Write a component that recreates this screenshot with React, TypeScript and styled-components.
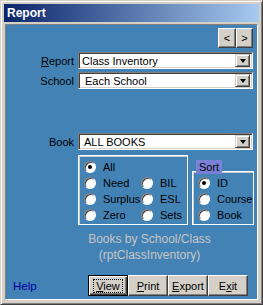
import * as React from 'react';
import styled, { createGlobalStyle } from 'styled-components';

const Global = createGlobalStyle`
  html, body { margin: 0; padding: 0; background: #d4d0c8; }
  body { font-family: "Liberation Sans", Arial, sans-serif; font-size: 11px; }
`;

const Window = styled.div`
  width: 263px;
  height: 305px;
  box-sizing: border-box;
  background: #d4d0c8;
  border: 1px solid;
  border-color: #d4d0c8 #404040 #404040 #d4d0c8;
  box-shadow: inset 1px 1px #fff, inset -1px -1px #808080;
  padding: 3px 3px 3px 3px;
  display: flex;
  flex-direction: column;
`;

const TitleBar = styled.div`
  height: 18px;
  background: linear-gradient(to right, #0a246a, #a6caf0);
  color: #fff;
  font-weight: bold;
  font-size: 12px;
  display: flex;
  align-items: center;
  padding-left: 3px;
  margin-bottom: 2px;
`;

const Panel = styled.div`
  flex: 1;
  margin: 0 1px 1px 1px;
  background: #4382b5;
  border: 1px solid;
  border-color: #808080 #fff #fff #808080;
  padding: 3px 3px 0 0;
  display: flex;
  flex-direction: column;
`;

const NavRow = styled.div`
  display: flex;
  justify-content: flex-end;
  padding-right: 1px;
  margin-bottom: 4px;
`;

const RaisedButton = styled.button<{ $w: number; $h: number }>`
  width: ${p => p.$w}px;
  height: ${p => p.$h}px;
  box-sizing: border-box;
  margin: 0;
  padding: 0;
  background: #d4d0c8;
  border: 1px solid;
  border-color: #fff #404040 #404040 #fff;
  box-shadow: inset -1px -1px #808080;
  font-family: "Liberation Sans", Arial, sans-serif;
  font-size: 11px;
  color: #000;
  display: flex;
  align-items: center;
  justify-content: center;
`;

const FieldRow = styled.div<{ $gap: number }>`
  display: flex;
  align-items: center;
  margin-bottom: ${p => p.$gap}px;
`;

const Label = styled.div`
  width: 68px;
  text-align: right;
  padding-right: 4px;
  color: #000;
  font-size: 11px;
`;

const Combo = styled.div`
  width: 175px;
  height: 17px;
  box-sizing: border-box;
  background: #fff;
  border: 1px solid;
  border-color: #808080 #fff #fff #808080;
  box-shadow: inset 1px 1px #404040, inset -1px -1px #d4d0c8;
  display: flex;
  align-items: center;
  padding: 2px;
`;

const ComboText = styled.div<{ $indent: number }>`
  flex: 1;
  padding-left: ${p => p.$indent}px;
  font-size: 11px;
  color: #000;
  white-space: nowrap;
  overflow: hidden;
`;

const DropButton = styled.div`
  width: 15px;
  height: 13px;
  box-sizing: border-box;
  background: #d4d0c8;
  border: 1px solid;
  border-color: #d4d0c8 #404040 #404040 #d4d0c8;
  box-shadow: inset 1px 1px #fff, inset -1px -1px #808080;
  display: flex;
  align-items: center;
  justify-content: center;
`;

const Arrow = styled.div`
  width: 0;
  height: 0;
  border-left: 3.5px solid transparent;
  border-right: 3.5px solid transparent;
  border-top: 4px solid #000;
  margin-top: 1px;
`;

const OptionsArea = styled.div`
  display: flex;
  align-items: flex-end;
  margin-left: 72px;
  margin-top: 5px;
`;

const GroupBox = styled.div<{ $w: number }>`
  position: relative;
  width: ${p => p.$w}px;
  box-sizing: border-box;
  border: 1px solid #fff;
  box-shadow: inset 1px 1px #c8ccd4;
  padding: 4px 0 3px 5px;
`;

const Columns = styled.div`
  display: grid;
  grid-template-columns: 57px auto;
  row-gap: 3px;
`;

const Stack = styled.div`
  display: flex;
  flex-direction: column;
  gap: 3px;
`;

const Option = styled.div`
  display: flex;
  align-items: center;
  height: 13px;
  color: #000;
  font-size: 11px;
`;

const Radio = styled.span<{ $on?: boolean }>`
  width: 12px;
  height: 12px;
  box-sizing: border-box;
  border-radius: 50%;
  background: #fff;
  border: 1px solid;
  border-color: #808080 #fff #fff #808080;
  box-shadow: inset 1px 1px #404040;
  display: inline-flex;
  align-items: center;
  justify-content: center;
  margin-right: 7px;
  &::after {
    content: '';
    width: 4px;
    height: 4px;
    border-radius: 50%;
    background: ${p => (p.$on ? '#000' : 'transparent')};
  }
`;

const SortWrap = styled.div`
  display: flex;
  flex-direction: column;
  margin-left: 4px;
`;

const SortTag = styled.div`
  align-self: flex-start;
  margin-left: 4px;
  margin-bottom: -3px;
  position: relative;
  z-index: 1;
  background: #7a80d6;
  color: #000;
  font-size: 11px;
  padding: 0 3px;
  height: 14px;
  line-height: 14px;
`;

const Caption = styled.div`
  margin-left: 72px;
  width: 143px;
  margin-top: 6px;
  text-align: center;
  color: #c6c6c6;
  font-size: 12px;
  line-height: 16px;
`;

const BottomRow = styled.div`
  margin-top: auto;
  display: flex;
  align-items: center;
  padding: 0 0 3px 7px;
`;

const HelpLink = styled.div`
  color: #0000a0;
  font-size: 11.5px;
  flex: 1;
`;

const Buttons = styled.div`
  display: flex;
  margin-right: 6px;
`;

const DefaultButton = styled(RaisedButton)`
  border: 1px solid #000;
  box-shadow: inset 1px 1px #fff, inset -1px -1px #404040, inset -2px -2px #808080;
`;

const Focus = styled.span`
  border: 1px dotted #000;
  padding: 0 2px;
  line-height: 12px;
`;

const U = styled.span`
  text-decoration: underline;
`;

export default function App() {
  return (
    <>
      <Global />
      <Window>
        <TitleBar>Report</TitleBar>
        <Panel>
          <NavRow>
            <RaisedButton $w={18} $h={20}>&lt;</RaisedButton>
            <RaisedButton $w={17} $h={20}>&gt;</RaisedButton>
          </NavRow>
          <FieldRow $gap={3}>
            <Label><U>R</U>eport</Label>
            <Combo>
              <ComboText $indent={1}>Class Inventory</ComboText>
              <DropButton><Arrow /></DropButton>
            </Combo>
          </FieldRow>
          <FieldRow $gap={44}>
            <Label>School</Label>
            <Combo>
              <ComboText $indent={4}>Each School</ComboText>
              <DropButton><Arrow /></DropButton>
            </Combo>
          </FieldRow>
          <FieldRow $gap={0}>
            <Label>Book</Label>
            <Combo>
              <ComboText $indent={3}>ALL BOOKS</ComboText>
              <DropButton><Arrow /></DropButton>
            </Combo>
          </FieldRow>
          <OptionsArea>
            <GroupBox $w={110}>
              <Columns>
                <Option><Radio $on />All</Option>
                <span />
                <Option><Radio />Need</Option>
                <Option><Radio />BIL</Option>
                <Option><Radio />Surplus</Option>
                <Option><Radio />ESL</Option>
                <Option><Radio />Zero</Option>
                <Option><Radio />Sets</Option>
              </Columns>
            </GroupBox>
            <SortWrap>
              <SortTag>Sort</SortTag>
              <GroupBox $w={62}>
                <Stack>
                  <Option><Radio $on />ID</Option>
                  <Option><Radio />Course</Option>
                  <Option><Radio />Book</Option>
                </Stack>
              </GroupBox>
            </SortWrap>
          </OptionsArea>
          <Caption>
            Books by School/Class
            <br />
            (rptClassInventory)
          </Caption>
          <BottomRow>
            <HelpLink>Help</HelpLink>
            <Buttons>
              <DefaultButton $w={40} $h={21}><Focus><U>V</U>iew</Focus></DefaultButton>
              <RaisedButton $w={40} $h={21}><span><U>P</U>rint</span></RaisedButton>
              <RaisedButton $w={40} $h={21}><span><U>E</U>xport</span></RaisedButton>
              <RaisedButton $w={40} $h={21}><span>E<U>x</U>it</span></RaisedButton>
            </Buttons>
          </BottomRow>
        </Panel>
      </Window>
    </>
  );
}
